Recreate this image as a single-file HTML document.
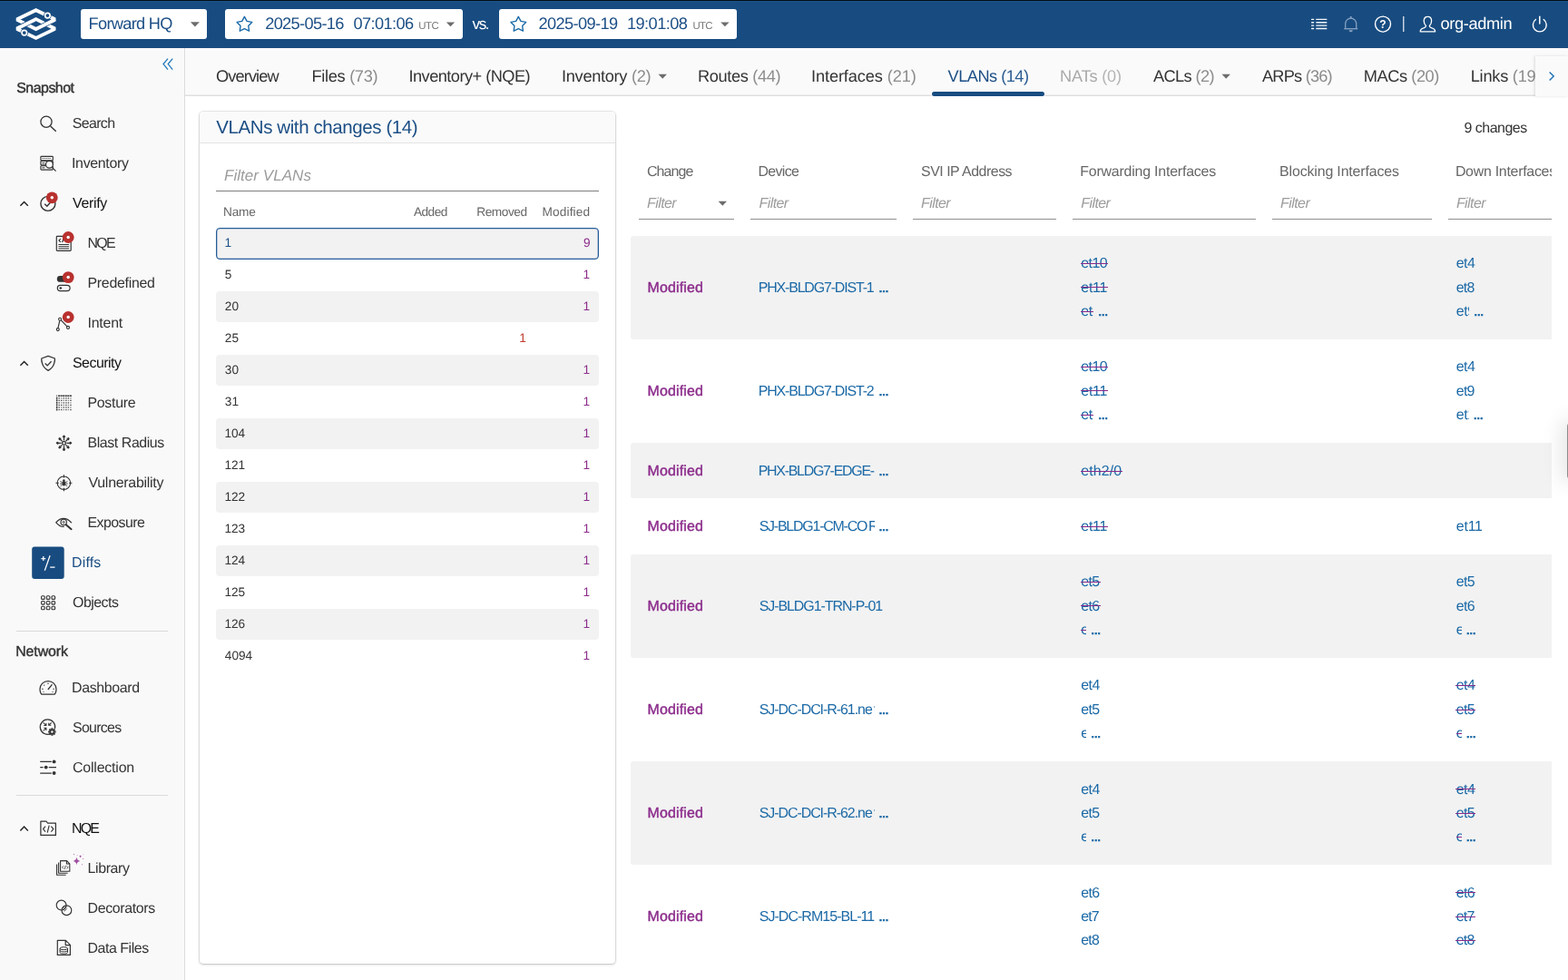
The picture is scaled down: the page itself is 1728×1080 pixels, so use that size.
<!DOCTYPE html>
<html lang="en">
<head>
<meta charset="utf-8">
<title>Forward Enterprise - Diffs - VLANs</title>
<style>
*{box-sizing:border-box;margin:0;padding:0}
html,body{width:1728px;height:1080px;overflow:hidden;background:#fff}
body{font-family:"Liberation Sans",sans-serif;color:#333;position:relative}
#txt{position:absolute;left:0;top:0;width:1728px;height:1080px;will-change:transform;text-rendering:geometricPrecision}
.tx{position:absolute;line-height:20px;height:20px;white-space:nowrap;display:block}
.tx i{font-style:normal}
.sk{position:absolute;height:1.15px;background:#8b2b8b;display:block}
#ico{position:absolute;left:0;top:0;overflow:hidden}
#hdr{position:absolute;left:0;top:0;width:1728px;height:53px;background:#184c80;border-top:1px solid #050c15;box-shadow:inset 0 1px 0 #18558b}
.hbox{position:absolute;top:10px;height:33px;background:#fff;border-radius:3px}
#side{position:absolute;left:0;top:53px;width:204px;height:1027px;background:#f9f9f9;border-right:1px solid #dcdcdc}
.hr{position:absolute;left:18px;width:167px;height:1px;background:#dadada}
#tabs{position:absolute;left:204px;top:53px;width:1524px;height:51px;background:#fafafa;box-shadow:0 1px 0 #eee,0 2px 0 #dedede}
#tabul{position:absolute;left:1026.5px;top:101px;width:124.4px;height:5px;border-radius:2.5px;background:#184c80;box-shadow:0 0 0 1px rgba(255,255,255,.85)}
#tabbtn{position:absolute;left:1692px;top:62px;width:36px;height:44px;background:#fafafa;box-shadow:-1px 0 3px rgba(0,0,0,.13)}
#card{position:absolute;left:220px;top:123px;width:458px;height:939px;background:#fff;border-radius:4px;box-shadow:0 0 0 1px rgba(0,0,0,.075),0 1px 3px rgba(0,0,0,.2)}
#card .hd{position:absolute;left:0;top:0;width:458px;height:35px;background:#fafafa;border-bottom:1px solid #e3e3e3;border-radius:4px 4px 0 0}
.vr{position:absolute;left:238px;width:422px;height:34px;border-radius:4px}
.vr.g{background:#f2f2f2}
.vr.sel{background:#f2f2f2;border:1px solid #245c9a;height:35px;box-shadow:inset 0 0 0 .3px #245c9a}
.ul{position:absolute;height:1.1px;background:#8f8f8f}
.row{position:absolute;left:695.3px;width:1014.7px;background:#f2f2f2;border-radius:3px 0 0 3px}
#rmask{position:absolute;left:1710px;top:160px;width:18px;height:920px;background:#fff}
#rhandle{position:absolute;left:1727.2px;top:466px;width:8px;height:62px;border-radius:4px;background:#8c8c8c;box-shadow:0 0 22px 5px rgba(0,0,0,.12)}
</style>
</head>
<body>
<div id="hdr"></div>
<div class="hbox" style="left:89px;width:139px"></div>
<div class="hbox" style="left:248px;width:262px"></div>
<div class="hbox" style="left:550px;width:262px"></div>
<div id="side"></div>
<div class="hr" style="top:695px"></div>
<div class="hr" style="top:876px"></div>
<div id="tabs"></div>
<div id="tabul"></div>
<div id="card"><div class="hd"></div></div>
<div class="ul" style="left:238px;top:210px;width:422px;background:#7d7d7d"></div>
<div class="vr sel" style="top:251.0px"></div>
<div class="vr g" style="top:321.0px"></div>
<div class="vr g" style="top:391.0px"></div>
<div class="vr g" style="top:461.0px"></div>
<div class="vr g" style="top:531.0px"></div>
<div class="vr g" style="top:601.0px"></div>
<div class="vr g" style="top:671.0px"></div>
<div class="ul" style="left:704.2px;top:241px;width:105.0px"></div>
<div class="ul" style="left:827px;top:241px;width:161.3px"></div>
<div class="ul" style="left:1006.2px;top:241px;width:158.0px"></div>
<div class="ul" style="left:1182px;top:241px;width:202.0px"></div>
<div class="ul" style="left:1402px;top:241px;width:175.6px"></div>
<div class="ul" style="left:1596px;top:241px;width:114.0px"></div>
<div class="row" style="top:260px;height:114px"></div>
<div class="row" style="top:488px;height:61px"></div>
<div class="row" style="top:610.7px;height:114px"></div>
<div class="row" style="top:839px;height:114px"></div>
<div id="txt">
<span class="tx" style="left:97.6px;top:16px;font-size:18.216px;color:#1b4e85;letter-spacing:-0.696px;">Forward HQ</span>
<span class="tx" style="left:292.2px;top:16px;font-size:18.216px;color:#1b4e85;letter-spacing:-0.656px;">2025-05-16</span>
<span class="tx" style="left:389.4px;top:16px;font-size:18.216px;color:#1b4e85;letter-spacing:-0.591px;">07:01:06</span>
<span class="tx" style="left:461.3px;top:19px;font-size:11.385px;color:#777;letter-spacing:-0.488px;">UTC</span>
<span class="tx" style="left:520.6px;top:16.5px;font-size:17.077px;color:#fff;letter-spacing:-1.434px;">vs.</span>
<span class="tx" style="left:593.6px;top:16px;font-size:18.216px;color:#1b4e85;letter-spacing:-0.622px;">2025-09-19</span>
<span class="tx" style="left:691px;top:16px;font-size:18.216px;color:#1b4e85;letter-spacing:-0.562px;">19:01:08</span>
<span class="tx" style="left:763.6px;top:19px;font-size:11.385px;color:#777;letter-spacing:-0.738px;">UTC</span>
<span class="tx" style="left:1587.4px;top:16px;font-size:18.216px;color:#fff;letter-spacing:-0.341px;">org-admin</span>
<span class="tx" style="left:238px;top:74.2px;font-size:18.216px;color:#333;letter-spacing:-0.89px;">Overview</span>
<span class="tx" style="left:343.5px;top:74.2px;font-size:18.216px;color:#333;letter-spacing:-0.313px;">Files <i style="color:#8c8c8c">(73)</i></span>
<span class="tx" style="left:450.5px;top:74.2px;font-size:18.216px;color:#333;letter-spacing:-0.539px;">Inventory+ (NQE)</span>
<span class="tx" style="left:619px;top:74.2px;font-size:18.216px;color:#333;letter-spacing:-0.302px;">Inventory <i style="color:#8c8c8c">(2)</i></span>
<span class="tx" style="left:769px;top:74.2px;font-size:18.216px;color:#333;letter-spacing:-0.355px;">Routes <i style="color:#8c8c8c">(44)</i></span>
<span class="tx" style="left:894px;top:74.2px;font-size:18.216px;color:#333;letter-spacing:-0.115px;">Interfaces <i style="color:#8c8c8c">(21)</i></span>
<span class="tx" style="left:1044.5px;top:74.2px;font-size:18.216px;color:#1b4e85;letter-spacing:-0.504px;">VLANs <i style="color:#2b5c93">(14)</i></span>
<span class="tx" style="left:1168px;top:74.2px;font-size:18.216px;color:#a9a9a9;letter-spacing:-0.199px;">NATs <i style="color:#b5b5b5">(0)</i></span>
<span class="tx" style="left:1271px;top:74.2px;font-size:18.216px;color:#333;letter-spacing:-0.609px;">ACLs <i style="color:#8c8c8c">(2)</i></span>
<span class="tx" style="left:1391px;top:74.2px;font-size:18.216px;color:#333;letter-spacing:-0.788px;">ARPs <i style="color:#8c8c8c">(36)</i></span>
<span class="tx" style="left:1502.8px;top:74.2px;font-size:18.216px;color:#333;letter-spacing:-0.428px;">MACs <i style="color:#8c8c8c">(20)</i></span>
<span class="tx" style="left:1620.7px;top:74.2px;font-size:18.216px;color:#333;letter-spacing:-0.231px;width:71.5px;overflow:hidden;">Links <i style="color:#8c8c8c">(19)</i></span>
<span class="tx" style="left:18.207px;top:87.7px;font-size:15.939px;color:#333;-webkit-text-stroke:0.414px #333;letter-spacing:-0.495px;">Snapshot</span>
<span class="tx" style="left:17.207px;top:709px;font-size:15.939px;color:#333;-webkit-text-stroke:0.414px #333;letter-spacing:-0.092px;">Network</span>
<span class="tx" style="left:79.7px;top:127px;font-size:15.939px;color:#333;letter-spacing:-0.618px;">Search</span>
<span class="tx" style="left:79px;top:171px;font-size:15.939px;color:#333;letter-spacing:-0.316px;">Inventory</span>
<span class="tx" style="left:80px;top:215px;font-size:15.939px;color:#111;letter-spacing:-0.312px;">Verify</span>
<span class="tx" style="left:96.5px;top:259px;font-size:15.939px;color:#333;letter-spacing:-1.693px;">NQE</span>
<span class="tx" style="left:96.5px;top:303px;font-size:15.939px;color:#333;letter-spacing:-0.295px;">Predefined</span>
<span class="tx" style="left:96.5px;top:347px;font-size:15.939px;color:#333;letter-spacing:-0.223px;">Intent</span>
<span class="tx" style="left:80px;top:391px;font-size:15.939px;color:#111;letter-spacing:-0.507px;">Security</span>
<span class="tx" style="left:96.5px;top:435px;font-size:15.939px;color:#333;letter-spacing:-0.302px;">Posture</span>
<span class="tx" style="left:96.5px;top:479px;font-size:15.939px;color:#333;letter-spacing:-0.42px;">Blast Radius</span>
<span class="tx" style="left:97.5px;top:523px;font-size:15.939px;color:#333;letter-spacing:-0.264px;">Vulnerability</span>
<span class="tx" style="left:96.5px;top:567px;font-size:15.939px;color:#333;letter-spacing:-0.557px;">Exposure</span>
<span class="tx" style="left:79px;top:611px;font-size:15.939px;color:#1b4e85;letter-spacing:0.177px;">Diffs</span>
<span class="tx" style="left:80px;top:655px;font-size:15.939px;color:#333;letter-spacing:-0.503px;">Objects</span>
<span class="tx" style="left:79px;top:748.5px;font-size:15.939px;color:#333;letter-spacing:-0.343px;">Dashboard</span>
<span class="tx" style="left:80px;top:792.5px;font-size:15.939px;color:#333;letter-spacing:-0.709px;">Sources</span>
<span class="tx" style="left:80px;top:836.5px;font-size:15.939px;color:#333;letter-spacing:-0.195px;">Collection</span>
<span class="tx" style="left:79px;top:903.5px;font-size:15.939px;color:#111;letter-spacing:-1.793px;">NQE</span>
<span class="tx" style="left:96.5px;top:947.5px;font-size:15.939px;color:#333;letter-spacing:-0.367px;">Library</span>
<span class="tx" style="left:96.5px;top:991.5px;font-size:15.939px;color:#333;letter-spacing:-0.345px;">Decorators</span>
<span class="tx" style="left:96.5px;top:1035.5px;font-size:15.939px;color:#333;letter-spacing:-0.445px;">Data Files</span>
<span class="tx" style="left:238.2px;top:130.6px;font-size:20.493px;color:#1b4e85;letter-spacing:-0.392px;">VLANs with changes (14)</span>
<span class="tx" style="left:247px;top:183.9px;font-size:17.077px;color:#9c9c9c;font-style:italic;letter-spacing:0.016px;">Filter VLANs</span>
<span class="tx" style="left:246px;top:223.6px;font-size:13.662px;color:#666;letter-spacing:-0.181px;">Name</span>
<span class="tx" style="left:455.9px;top:223.6px;font-size:13.662px;color:#666;letter-spacing:-0.501px;">Added</span>
<span class="tx" style="left:525.3px;top:223.6px;font-size:13.662px;color:#666;letter-spacing:-0.46px;">Removed</span>
<span class="tx" style="left:597.6px;top:223.6px;font-size:13.662px;color:#666;letter-spacing:0.11px;">Modified</span>
<span class="tx" style="left:247.4px;top:258.2px;font-size:13.662px;color:#1b4e85;">1</span>
<span class="tx" style="left:643px;top:258.2px;font-size:13.662px;color:#8b2b8b;">9</span>
<span class="tx" style="left:247.8px;top:293.2px;font-size:13.662px;color:#333;">5</span>
<span class="tx" style="left:642.6px;top:293.2px;font-size:13.662px;color:#8b2b8b;">1</span>
<span class="tx" style="left:247.8px;top:328.2px;font-size:13.662px;color:#333;">20</span>
<span class="tx" style="left:642.6px;top:328.2px;font-size:13.662px;color:#8b2b8b;">1</span>
<span class="tx" style="left:247.8px;top:363.2px;font-size:13.662px;color:#333;">25</span>
<span class="tx" style="left:572.2px;top:363.2px;font-size:13.662px;color:#c0392b;">1</span>
<span class="tx" style="left:247.8px;top:398.2px;font-size:13.662px;color:#333;">30</span>
<span class="tx" style="left:642.6px;top:398.2px;font-size:13.662px;color:#8b2b8b;">1</span>
<span class="tx" style="left:247.8px;top:433.2px;font-size:13.662px;color:#333;">31</span>
<span class="tx" style="left:642.6px;top:433.2px;font-size:13.662px;color:#8b2b8b;">1</span>
<span class="tx" style="left:247.4px;top:468.2px;font-size:13.662px;color:#333;">104</span>
<span class="tx" style="left:642.6px;top:468.2px;font-size:13.662px;color:#8b2b8b;">1</span>
<span class="tx" style="left:247.4px;top:503.2px;font-size:13.662px;color:#333;">121</span>
<span class="tx" style="left:642.6px;top:503.2px;font-size:13.662px;color:#8b2b8b;">1</span>
<span class="tx" style="left:247.4px;top:538.2px;font-size:13.662px;color:#333;">122</span>
<span class="tx" style="left:642.6px;top:538.2px;font-size:13.662px;color:#8b2b8b;">1</span>
<span class="tx" style="left:247.4px;top:573.2px;font-size:13.662px;color:#333;">123</span>
<span class="tx" style="left:642.6px;top:573.2px;font-size:13.662px;color:#8b2b8b;">1</span>
<span class="tx" style="left:247.4px;top:608.2px;font-size:13.662px;color:#333;">124</span>
<span class="tx" style="left:642.6px;top:608.2px;font-size:13.662px;color:#8b2b8b;">1</span>
<span class="tx" style="left:247.4px;top:643.2px;font-size:13.662px;color:#333;">125</span>
<span class="tx" style="left:642.6px;top:643.2px;font-size:13.662px;color:#8b2b8b;">1</span>
<span class="tx" style="left:247.4px;top:678.2px;font-size:13.662px;color:#333;">126</span>
<span class="tx" style="left:642.6px;top:678.2px;font-size:13.662px;color:#8b2b8b;">1</span>
<span class="tx" style="left:247.8px;top:713.2px;font-size:13.662px;color:#333;">4094</span>
<span class="tx" style="left:642.6px;top:713.2px;font-size:13.662px;color:#8b2b8b;">1</span>
<span class="tx" style="left:1613.4px;top:131.8px;font-size:15.939px;color:#333;letter-spacing:-0.464px;">9 changes</span>
<span class="tx" style="left:712.9px;top:180px;font-size:15.939px;color:#666;letter-spacing:-0.884px;">Change</span>
<span class="tx" style="left:835.5px;top:180px;font-size:15.939px;color:#666;letter-spacing:-0.662px;">Device</span>
<span class="tx" style="left:1015px;top:180px;font-size:15.939px;color:#666;letter-spacing:-0.479px;">SVI IP Address</span>
<span class="tx" style="left:1190.3px;top:180px;font-size:15.939px;color:#666;letter-spacing:-0.206px;">Forwarding Interfaces</span>
<span class="tx" style="left:1410.1px;top:180px;font-size:15.939px;color:#666;letter-spacing:-0.148px;">Blocking Interfaces</span>
<span class="tx" style="left:1603.9px;top:180px;font-size:15.939px;color:#666;letter-spacing:-0.27px;width:106.1px;overflow:hidden;">Down Interfaces</span>
<span class="tx" style="left:713px;top:214.8px;font-size:15.939px;color:#9c9c9c;font-style:italic;letter-spacing:-0.557px;">Filter</span>
<span class="tx" style="left:836.5px;top:214.8px;font-size:15.939px;color:#9c9c9c;font-style:italic;letter-spacing:-0.557px;">Filter</span>
<span class="tx" style="left:1015px;top:214.8px;font-size:15.939px;color:#9c9c9c;font-style:italic;letter-spacing:-0.557px;">Filter</span>
<span class="tx" style="left:1191.3px;top:214.8px;font-size:15.939px;color:#9c9c9c;font-style:italic;letter-spacing:-0.557px;">Filter</span>
<span class="tx" style="left:1411.1px;top:214.8px;font-size:15.939px;color:#9c9c9c;font-style:italic;letter-spacing:-0.557px;">Filter</span>
<span class="tx" style="left:1604.9px;top:214.8px;font-size:15.939px;color:#9c9c9c;font-style:italic;letter-spacing:-0.557px;">Filter</span>
<span class="tx" style="left:713.507px;top:307.5px;font-size:15.939px;color:#8b2b8b;-webkit-text-stroke:0.414px #8b2b8b;letter-spacing:0.18px;">Modified</span>
<span class="tx" style="left:835.7px;top:307.5px;font-size:15.939px;color:#1b69a6;letter-spacing:-1.143px;width:128.6px;overflow:hidden;">PHX-BLDG7-DIST-1</span>
<span class="tx" style="left:968.6px;top:308.5px;font-size:10.971px;color:#1b69a6;font-weight:bold;-webkit-text-stroke:0.6px #1b69a6;">…</span>
<span class="tx" style="left:1191.25px;top:281.1px;font-size:15.939px;color:#1b69a6;letter-spacing:-0.545px;">et10<i class="sk" style="left:-0.45px;top:8.85px;width:30.4px"></i></span>
<span class="tx" style="left:1191.25px;top:307.5px;font-size:15.939px;color:#1b69a6;letter-spacing:-0.216px;">et11<i class="sk" style="left:-0.45px;top:8.85px;width:30.2px"></i></span>
<span class="tx" style="left:1191.25px;top:333.9px;font-size:15.939px;color:#1b69a6;letter-spacing:-0.353px;width:13.85px;overflow:hidden;">et1<i class="sk" style="left:-0.45px;top:8.85px;width:400px"></i></span>
<span class="tx" style="left:1210.15px;top:334.9px;font-size:10.971px;color:#1b69a6;font-weight:bold;-webkit-text-stroke:0.6px #1b69a6;">…</span>
<span class="tx" style="left:1604.8px;top:281.1px;font-size:15.939px;color:#1b69a6;letter-spacing:-0.538px;">et4</span>
<span class="tx" style="left:1604.8px;top:307.5px;font-size:15.939px;color:#1b69a6;letter-spacing:-0.788px;">et8</span>
<span class="tx" style="left:1604.8px;top:333.9px;font-size:15.939px;color:#1b69a6;letter-spacing:-0.353px;width:14.35px;overflow:hidden;">et9</span>
<span class="tx" style="left:1624.2px;top:334.9px;font-size:10.971px;color:#1b69a6;font-weight:bold;-webkit-text-stroke:0.6px #1b69a6;">…</span>
<span class="tx" style="left:713.507px;top:421.5px;font-size:15.939px;color:#8b2b8b;-webkit-text-stroke:0.414px #8b2b8b;letter-spacing:0.18px;">Modified</span>
<span class="tx" style="left:835.7px;top:421.5px;font-size:15.939px;color:#1b69a6;letter-spacing:-1.143px;width:128.6px;overflow:hidden;">PHX-BLDG7-DIST-2</span>
<span class="tx" style="left:968.6px;top:422.5px;font-size:10.971px;color:#1b69a6;font-weight:bold;-webkit-text-stroke:0.6px #1b69a6;">…</span>
<span class="tx" style="left:1191.25px;top:395.1px;font-size:15.939px;color:#1b69a6;letter-spacing:-0.545px;">et10<i class="sk" style="left:-0.45px;top:8.85px;width:30.4px"></i></span>
<span class="tx" style="left:1191.25px;top:421.5px;font-size:15.939px;color:#1b69a6;letter-spacing:-0.216px;">et11<i class="sk" style="left:-0.45px;top:8.85px;width:30.2px"></i></span>
<span class="tx" style="left:1191.25px;top:447.9px;font-size:15.939px;color:#1b69a6;letter-spacing:-0.353px;width:13.85px;overflow:hidden;">et1<i class="sk" style="left:-0.45px;top:8.85px;width:400px"></i></span>
<span class="tx" style="left:1210.15px;top:448.9px;font-size:10.971px;color:#1b69a6;font-weight:bold;-webkit-text-stroke:0.6px #1b69a6;">…</span>
<span class="tx" style="left:1604.8px;top:395.1px;font-size:15.939px;color:#1b69a6;letter-spacing:-0.538px;">et4</span>
<span class="tx" style="left:1604.8px;top:421.5px;font-size:15.939px;color:#1b69a6;letter-spacing:-0.738px;">et9</span>
<span class="tx" style="left:1604.8px;top:447.9px;font-size:15.939px;color:#1b69a6;letter-spacing:-0.353px;width:13.95px;overflow:hidden;">et1</span>
<span class="tx" style="left:1623.8px;top:448.9px;font-size:10.971px;color:#1b69a6;font-weight:bold;-webkit-text-stroke:0.6px #1b69a6;">…</span>
<span class="tx" style="left:713.507px;top:509.75px;font-size:15.939px;color:#8b2b8b;-webkit-text-stroke:0.414px #8b2b8b;letter-spacing:0.18px;">Modified</span>
<span class="tx" style="left:835.7px;top:509.75px;font-size:15.939px;color:#1b69a6;letter-spacing:-1.259px;width:128.6px;overflow:hidden;">PHX-BLDG7-EDGE-</span>
<span class="tx" style="left:968.6px;top:510.75px;font-size:10.971px;color:#1b69a6;font-weight:bold;-webkit-text-stroke:0.6px #1b69a6;">…</span>
<span class="tx" style="left:1191.25px;top:509.75px;font-size:15.939px;color:#1b69a6;letter-spacing:0.116px;">eth2/0<i class="sk" style="left:-0.45px;top:8.85px;width:45.9px"></i></span>
<span class="tx" style="left:713.507px;top:570.9px;font-size:15.939px;color:#8b2b8b;-webkit-text-stroke:0.414px #8b2b8b;letter-spacing:0.18px;">Modified</span>
<span class="tx" style="left:836.7px;top:570.9px;font-size:15.939px;color:#1b69a6;letter-spacing:-1.205px;width:127.6px;overflow:hidden;">SJ-BLDG1-CM-CO<span style="margin-left:1.80px">R</span></span>
<span class="tx" style="left:968.6px;top:571.9px;font-size:10.971px;color:#1b69a6;font-weight:bold;-webkit-text-stroke:0.6px #1b69a6;">…</span>
<span class="tx" style="left:1191.25px;top:570.9px;font-size:15.939px;color:#1b69a6;letter-spacing:-0.216px;">et11<i class="sk" style="left:-0.45px;top:8.85px;width:30.2px"></i></span>
<span class="tx" style="left:1604.8px;top:570.9px;font-size:15.939px;color:#1b69a6;letter-spacing:-0.216px;">et11</span>
<span class="tx" style="left:713.507px;top:658.5px;font-size:15.939px;color:#8b2b8b;-webkit-text-stroke:0.414px #8b2b8b;letter-spacing:0.18px;">Modified</span>
<span class="tx" style="left:836.7px;top:658.5px;font-size:15.939px;color:#1b69a6;letter-spacing:-1.037px;">SJ-BLDG1-TRN-P-01</span>
<span class="tx" style="left:1191.25px;top:632.1px;font-size:15.939px;color:#1b69a6;letter-spacing:-0.613px;">et5<i class="sk" style="left:-0.45px;top:8.85px;width:21.95px"></i></span>
<span class="tx" style="left:1191.25px;top:658.5px;font-size:15.939px;color:#1b69a6;letter-spacing:-0.638px;">et6<i class="sk" style="left:-0.45px;top:8.85px;width:21.9px"></i></span>
<span class="tx" style="left:1191.25px;top:684.9px;font-size:15.939px;color:#1b69a6;letter-spacing:-0.353px;width:5.85px;overflow:hidden;">et<i class="sk" style="left:-0.45px;top:8.85px;width:400px"></i></span>
<span class="tx" style="left:1202.15px;top:685.9px;font-size:10.971px;color:#1b69a6;font-weight:bold;-webkit-text-stroke:0.6px #1b69a6;">…</span>
<span class="tx" style="left:1604.8px;top:632.1px;font-size:15.939px;color:#1b69a6;letter-spacing:-0.613px;">et5</span>
<span class="tx" style="left:1604.8px;top:658.5px;font-size:15.939px;color:#1b69a6;letter-spacing:-0.638px;">et6</span>
<span class="tx" style="left:1604.8px;top:684.9px;font-size:15.939px;color:#1b69a6;letter-spacing:-0.353px;width:5.85px;overflow:hidden;">et</span>
<span class="tx" style="left:1615.7px;top:685.9px;font-size:10.971px;color:#1b69a6;font-weight:bold;-webkit-text-stroke:0.6px #1b69a6;">…</span>
<span class="tx" style="left:713.507px;top:772.8px;font-size:15.939px;color:#8b2b8b;-webkit-text-stroke:0.414px #8b2b8b;letter-spacing:0.18px;">Modified</span>
<span class="tx" style="left:836.7px;top:772.8px;font-size:15.939px;color:#1b69a6;letter-spacing:-1.031px;width:127.6px;overflow:hidden;">SJ-DC-DCI-R-61.ne<span style="margin-left:2.00px">t</span></span>
<span class="tx" style="left:968.6px;top:773.8px;font-size:10.971px;color:#1b69a6;font-weight:bold;-webkit-text-stroke:0.6px #1b69a6;">…</span>
<span class="tx" style="left:1191.25px;top:746.4px;font-size:15.939px;color:#1b69a6;letter-spacing:-0.538px;">et4</span>
<span class="tx" style="left:1191.25px;top:772.8px;font-size:15.939px;color:#1b69a6;letter-spacing:-0.613px;">et5</span>
<span class="tx" style="left:1191.25px;top:799.2px;font-size:15.939px;color:#1b69a6;letter-spacing:-0.353px;width:5.85px;overflow:hidden;">et</span>
<span class="tx" style="left:1202.15px;top:800.2px;font-size:10.971px;color:#1b69a6;font-weight:bold;-webkit-text-stroke:0.6px #1b69a6;">…</span>
<span class="tx" style="left:1604.8px;top:746.4px;font-size:15.939px;color:#1b69a6;letter-spacing:-0.538px;">et4<i class="sk" style="left:-0.45px;top:8.85px;width:22.1px"></i></span>
<span class="tx" style="left:1604.8px;top:772.8px;font-size:15.939px;color:#1b69a6;letter-spacing:-0.613px;">et5<i class="sk" style="left:-0.45px;top:8.85px;width:21.95px"></i></span>
<span class="tx" style="left:1604.8px;top:799.2px;font-size:15.939px;color:#1b69a6;letter-spacing:-0.353px;width:5.85px;overflow:hidden;">et<i class="sk" style="left:-0.45px;top:8.85px;width:400px"></i></span>
<span class="tx" style="left:1615.7px;top:800.2px;font-size:10.971px;color:#1b69a6;font-weight:bold;-webkit-text-stroke:0.6px #1b69a6;">…</span>
<span class="tx" style="left:713.507px;top:886.9px;font-size:15.939px;color:#8b2b8b;-webkit-text-stroke:0.414px #8b2b8b;letter-spacing:0.18px;">Modified</span>
<span class="tx" style="left:836.7px;top:886.9px;font-size:15.939px;color:#1b69a6;letter-spacing:-1.031px;width:127.6px;overflow:hidden;">SJ-DC-DCI-R-62.ne<span style="margin-left:2.00px">t</span></span>
<span class="tx" style="left:968.6px;top:887.9px;font-size:10.971px;color:#1b69a6;font-weight:bold;-webkit-text-stroke:0.6px #1b69a6;">…</span>
<span class="tx" style="left:1191.25px;top:860.5px;font-size:15.939px;color:#1b69a6;letter-spacing:-0.538px;">et4</span>
<span class="tx" style="left:1191.25px;top:886.9px;font-size:15.939px;color:#1b69a6;letter-spacing:-0.613px;">et5</span>
<span class="tx" style="left:1191.25px;top:913.3px;font-size:15.939px;color:#1b69a6;letter-spacing:-0.353px;width:5.85px;overflow:hidden;">et</span>
<span class="tx" style="left:1202.15px;top:914.3px;font-size:10.971px;color:#1b69a6;font-weight:bold;-webkit-text-stroke:0.6px #1b69a6;">…</span>
<span class="tx" style="left:1604.8px;top:860.5px;font-size:15.939px;color:#1b69a6;letter-spacing:-0.538px;">et4<i class="sk" style="left:-0.45px;top:8.85px;width:22.1px"></i></span>
<span class="tx" style="left:1604.8px;top:886.9px;font-size:15.939px;color:#1b69a6;letter-spacing:-0.613px;">et5<i class="sk" style="left:-0.45px;top:8.85px;width:21.95px"></i></span>
<span class="tx" style="left:1604.8px;top:913.3px;font-size:15.939px;color:#1b69a6;letter-spacing:-0.353px;width:5.85px;overflow:hidden;">et<i class="sk" style="left:-0.45px;top:8.85px;width:400px"></i></span>
<span class="tx" style="left:1615.7px;top:914.3px;font-size:10.971px;color:#1b69a6;font-weight:bold;-webkit-text-stroke:0.6px #1b69a6;">…</span>
<span class="tx" style="left:713.507px;top:1000.9px;font-size:15.939px;color:#8b2b8b;-webkit-text-stroke:0.414px #8b2b8b;letter-spacing:0.18px;">Modified</span>
<span class="tx" style="left:836.7px;top:1000.9px;font-size:15.939px;color:#1b69a6;letter-spacing:-0.92px;width:127.6px;overflow:hidden;">SJ-DC-RM15-BL-11</span>
<span class="tx" style="left:968.6px;top:1001.9px;font-size:10.971px;color:#1b69a6;font-weight:bold;-webkit-text-stroke:0.6px #1b69a6;">…</span>
<span class="tx" style="left:1191.25px;top:974.5px;font-size:15.939px;color:#1b69a6;letter-spacing:-0.638px;">et6</span>
<span class="tx" style="left:1191.25px;top:1000.9px;font-size:15.939px;color:#1b69a6;letter-spacing:-0.838px;">et7</span>
<span class="tx" style="left:1191.25px;top:1027.3px;font-size:15.939px;color:#1b69a6;letter-spacing:-0.788px;">et8</span>
<span class="tx" style="left:1604.8px;top:974.5px;font-size:15.939px;color:#1b69a6;letter-spacing:-0.638px;">et6<i class="sk" style="left:-0.45px;top:8.85px;width:21.9px"></i></span>
<span class="tx" style="left:1604.8px;top:1000.9px;font-size:15.939px;color:#1b69a6;letter-spacing:-0.838px;">et7<i class="sk" style="left:-0.45px;top:8.85px;width:21.5px"></i></span>
<span class="tx" style="left:1604.8px;top:1027.3px;font-size:15.939px;color:#1b69a6;letter-spacing:-0.788px;">et8<i class="sk" style="left:-0.45px;top:8.85px;width:21.6px"></i></span>
</div>
<div id="tabbtn"></div><div id="rmask"></div><div id="rhandle"></div>
<svg id="ico" width="1728" height="1080" viewBox="0 0 1728 1080"><g transform="translate(39.6 26.6)" ><clipPath id="lgc"><rect x="-21.9" y="-20" width="43.8" height="40"/></clipPath><g clip-path="url(#lgc)" fill="none" stroke-linejoin="miter" stroke-miterlimit="8"><path d="M-9.5 0.58 L-21.4 -5.13 L0 -15.4 L21.4 -5.13 L0 5.45 L-10.6 0.21" stroke="#fff" stroke-width="3.8"/><path d="M-9.5 0.58 L-21.4 -5.13 L0 -15.4 L21.4 -5.13 L0 5.45 L-10.6 0.21" stroke="#fff" stroke-width="3.8" transform="rotate(180)"/><path d="M16.9 -2.90 L2 4.46" stroke="#184c80" stroke-width="5.3"/><path d="M16.9 -2.90 L2 4.46" stroke="#184c80" stroke-width="5.3" transform="rotate(180)"/><path d="M21.4 -5.13 L1.6 4.66" stroke="#fff" stroke-width="3.8"/><path d="M21.4 -5.13 L1.6 4.66" stroke="#fff" stroke-width="3.8" transform="rotate(180)"/></g><circle cx="12.8" cy="-9.5" r="4.3" fill="#184c80"/><circle cx="12.8" cy="-9.5" r="2.75" fill="#184c80" stroke="#fff" stroke-width="1.7"/><circle cx="-12.8" cy="9.5" r="4.3" fill="#184c80"/><circle cx="-12.8" cy="9.5" r="2.75" fill="#184c80" stroke="#fff" stroke-width="1.7"/></g><path d="M209.9 24.299999999999997 h10 l-5.0 5.2 z" fill="#6d6d6d"/><g transform="translate(269.4 27.1)" ><polygon points="0.00,-8.75 2.70,-3.72 8.32,-2.70 4.37,1.42 5.14,7.08 0.00,4.60 -5.14,7.08 -4.37,1.42 -8.32,-2.70 -2.70,-3.72" fill="none" stroke="#1b6aa8" stroke-width="1.4" stroke-linejoin="round"/></g><path d="M491.8 24.45 h9.4 l-4.7 4.9 z" fill="#6d6d6d"/><g transform="translate(571.3 27.1)" ><polygon points="0.00,-8.75 2.70,-3.72 8.32,-2.70 4.37,1.42 5.14,7.08 0.00,4.60 -5.14,7.08 -4.37,1.42 -8.32,-2.70 -2.70,-3.72" fill="none" stroke="#1b6aa8" stroke-width="1.4" stroke-linejoin="round"/></g><path d="M794.1999999999999 24.45 h9.4 l-4.7 4.9 z" fill="#6d6d6d"/><rect x="1445" y="20.70" width="3.2" height="1.4" rx="0.4" fill="#f4f6f9"/><rect x="1450.2" y="20.70" width="12.2" height="1.4" rx="0.4" fill="#f4f6f9"/><rect x="1445" y="24.05" width="3.2" height="1.4" rx="0.4" fill="#f4f6f9"/><rect x="1450.2" y="24.05" width="12.2" height="1.4" rx="0.4" fill="#f4f6f9"/><rect x="1445" y="27.40" width="3.2" height="1.4" rx="0.4" fill="#f4f6f9"/><rect x="1450.2" y="27.40" width="12.2" height="1.4" rx="0.4" fill="#f4f6f9"/><rect x="1445" y="30.75" width="3.2" height="1.4" rx="0.4" fill="#f4f6f9"/><rect x="1450.2" y="30.75" width="12.2" height="1.4" rx="0.4" fill="#f4f6f9"/><g transform="translate(1488.7 26.5)" ><path d="M-6 5.2 V-0.2 A6 6.2 0 0 1 6 -0.2 V5.2" fill="none" stroke="#89a3c3" stroke-width="1.25"/><path d="M-7.5 5.2 H7.5" stroke="#89a3c3" stroke-width="1.3"/><circle cx="0" cy="-7.4" r="1.15" fill="#89a3c3"/><path d="M-2.1 6.7 A2.1 2.1 0 0 0 2.1 6.7 Z" fill="#89a3c3"/></g><g transform="translate(1524 26.6)" ><circle r="8.5" fill="none" stroke="#fff" stroke-width="1.4"/><text x="0" y="4.3" text-anchor="middle" font-family="Liberation Sans, sans-serif" font-weight="bold" font-size="12" fill="#fff">?</text></g><rect x="1546.1" y="18" width="1.3" height="17" fill="#dfe6ee"/><g transform="translate(1573.4 26.5)" ><path d="M0 -8.2 C2.7 -8.2 4.2 -6 4.2 -3.4 C4.2 -1 3 1 1.9 1.9 C1.9 3.3 2.5 3.6 4.5 4.3 C7 5.1 8.2 6 8.2 8.3 H-8.2 C-8.2 6 -7 5.1 -4.5 4.3 C-2.5 3.6 -1.9 3.3 -1.9 1.9 C-3 1 -4.2 -1 -4.2 -3.4 C-4.2 -6 -2.7 -8.2 0 -8.2 Z" fill="none" stroke="#fff" stroke-width="1.3" stroke-linejoin="round"/></g><g transform="translate(1696.8 27.3)" ><path d="M-4.4 -5.8 A7.4 7.4 0 1 0 4.4 -5.8" fill="none" stroke="#fff" stroke-width="1.4" stroke-linecap="round"/><path d="M0 -9 V-1.2" stroke="#fff" stroke-width="1.5" stroke-linecap="round"/></g><path d="M725.5 81.75 h9.4 l-4.7 4.9 z" fill="#6d6d6d"/><path d="M1346.5 81.75 h9.4 l-4.7 4.9 z" fill="#6d6d6d"/><path d="M1707.6 79.4 L1712.2 84 L1707.6 88.6" fill="none" stroke="#1b6fb5" stroke-width="1.4"/><path d="M185 64.6 L180 70.6 L185 76.6 M190.2 64.6 L185.2 70.6 L190.2 76.6" fill="none" stroke="#1b75bb" stroke-width="1.25"/><circle cx="51" cy="134.2" r="6.1" fill="none" stroke="#333" stroke-width="1.3"/><path d="M55.6 138.9 L61.7 144.7" fill="none" stroke="#333" stroke-width="1.4" /><rect x="44.9" y="172.3" width="13.4" height="4.4" rx="0.8" fill="none" stroke="#333" stroke-width="1.15"/><rect x="44.9" y="177.5" width="13.4" height="4.4" rx="0.8" fill="none" stroke="#333" stroke-width="1.15"/><rect x="44.9" y="182.70000000000002" width="13.4" height="4.4" rx="0.8" fill="none" stroke="#333" stroke-width="1.15"/><rect x="46.6" y="174" width="1" height="1" fill="#333"/><rect x="48.6" y="174" width="1" height="1" fill="#333"/><rect x="50.6" y="174" width="1" height="1" fill="#333"/><rect x="52.6" y="174" width="1" height="1" fill="#333"/><rect x="54.6" y="174" width="1" height="1" fill="#333"/><rect x="46.4" y="179.2" width="3" height="1" fill="#333"/><rect x="46.4" y="184.4" width="3" height="1" fill="#333"/><circle cx="54.4" cy="181.3" r="3.9" fill="#f9f9f9" stroke="#333" stroke-width="1.2"/><path d="M57.3 184.4 L61.6 188.6" fill="none" stroke="#333" stroke-width="1.3" /><circle cx="52.9" cy="224.4" r="8.0" fill="none" stroke="#333" stroke-width="1.4"/><path d="M49.2 224.8 L51.8 227.3 L56.2 222.5" fill="none" stroke="#333" stroke-width="1.4" /><g transform="translate(57.3 217.8)" ><circle r="6.4" fill="#b8312f"/><circle r="1.75" fill="#fff"/></g><g transform="translate(26.6 224.6)" ><path d="M-4.2 2.2 L0 -2.1 L4.2 2.2" fill="none" stroke="#222" stroke-width="1.45"/></g><rect x="62.3" y="260.4" width="15.9" height="15.9" rx="0.8" fill="none" stroke="#333" stroke-width="1.2"/><path d="M66.8 263.2 L65 265 L66.8 266.8 M70 263 L68.6 267" fill="none" stroke="#333" stroke-width="1.2" /><rect x="64.4" y="269.0" width="11.7" height="1" fill="#333"/><rect x="64.4" y="271.2" width="11.7" height="1" fill="#333"/><rect x="64.4" y="273.4" width="11.7" height="1" fill="#333"/><g transform="translate(75.2 261.5)" ><circle r="6.4" fill="#b8312f"/><circle r="1.75" fill="#fff"/></g><rect x="62.8" y="304" width="14.6" height="6.8" rx="3.4" fill="#333"/><rect x="63.3" y="314.4" width="13.8" height="6.2" rx="3.1" fill="none" stroke="#333" stroke-width="1.2"/><circle cx="66.8" cy="317.5" r="1.35" fill="#333"/><g transform="translate(75.2 305.6)" ><circle r="6.4" fill="#b8312f"/><circle r="1.75" fill="#fff"/></g><path d="M63.9 361.6 L65.8 353.4 M67 352.6 L74 359.8" fill="none" stroke="#333" stroke-width="1.2" /><circle cx="66.1" cy="351.8" r="1.5" fill="none" stroke="#333" stroke-width="1.1"/><circle cx="63.8" cy="363.1" r="1.5" fill="none" stroke="#333" stroke-width="1.1"/><circle cx="75" cy="360.9" r="1.5" fill="none" stroke="#333" stroke-width="1.1"/><g transform="translate(75.2 349.5)" ><circle r="6.4" fill="#b8312f"/><circle r="1.75" fill="#fff"/></g><g transform="translate(26.6 400.6)" ><path d="M-4.2 2.2 L0 -2.1 L4.2 2.2" fill="none" stroke="#222" stroke-width="1.45"/></g><path d="M53.1 392.3 L60.4 395 C60.4 395 61.2 404.4 53.1 408.3 C45 404.4 45.8 395 45.8 395 Z" fill="none" stroke="#333" stroke-width="1.3" stroke-linejoin="round"/><path d="M49.7 400.5 L52.2 402.9 L56.6 398.2" fill="none" stroke="#333" stroke-width="1.3" /><rect x="61.90" y="435.50" width="1.2" height="1.2" fill="#333" opacity="0.8"/><rect x="61.90" y="437.70" width="1.5" height="2" fill="#333"/><rect x="61.90" y="440.25" width="1.5" height="2" fill="#333"/><rect x="61.90" y="442.80" width="1.5" height="2" fill="#333"/><rect x="61.90" y="445.35" width="1.5" height="2" fill="#333"/><rect x="61.90" y="447.90" width="1.5" height="2" fill="#333"/><rect x="61.90" y="450.45" width="1.5" height="2" fill="#333"/><rect x="64.05" y="435.50" width="2.1" height="1.5" fill="#333"/><rect x="64.55" y="438.15" width="1.3" height="1.3" fill="#333" opacity="0.95"/><rect x="64.55" y="440.70" width="1.3" height="1.3" fill="#333" opacity="0.95"/><rect x="64.55" y="443.25" width="1.3" height="1.3" fill="#333" opacity="0.95"/><rect x="64.55" y="445.80" width="1.3" height="1.3" fill="#333" opacity="0.95"/><rect x="64.55" y="448.35" width="1.3" height="1.3" fill="#333" opacity="0.95"/><rect x="64.55" y="450.90" width="1.3" height="1.3" fill="#333" opacity="0.95"/><rect x="66.60" y="435.50" width="2.1" height="1.5" fill="#333"/><rect x="67.10" y="438.15" width="1.3" height="1.3" fill="#333" opacity="0.6"/><rect x="67.10" y="440.70" width="1.3" height="1.3" fill="#333" opacity="0.95"/><rect x="67.10" y="443.25" width="1.3" height="1.3" fill="#333" opacity="0.6"/><rect x="67.10" y="445.80" width="1.3" height="1.3" fill="#333" opacity="0.95"/><rect x="67.10" y="448.35" width="1.3" height="1.3" fill="#333" opacity="0.6"/><rect x="67.10" y="450.90" width="1.3" height="1.3" fill="#333" opacity="0.95"/><rect x="69.15" y="435.50" width="2.1" height="1.5" fill="#333"/><rect x="69.65" y="438.15" width="1.3" height="1.3" fill="#333" opacity="0.95"/><rect x="69.65" y="440.70" width="1.3" height="1.3" fill="#333" opacity="0.6"/><rect x="69.65" y="443.25" width="1.3" height="1.3" fill="#333" opacity="0.95"/><rect x="69.65" y="445.80" width="1.3" height="1.3" fill="#333" opacity="0.6"/><rect x="69.65" y="448.35" width="1.3" height="1.3" fill="#333" opacity="0.95"/><rect x="69.65" y="450.90" width="1.3" height="1.3" fill="#333" opacity="0.6"/><rect x="71.70" y="435.50" width="2.1" height="1.5" fill="#333"/><rect x="72.20" y="438.15" width="1.3" height="1.3" fill="#333" opacity="0.95"/><rect x="72.20" y="440.70" width="1.3" height="1.3" fill="#333" opacity="0.95"/><rect x="72.20" y="443.25" width="1.3" height="1.3" fill="#333" opacity="0.95"/><rect x="72.20" y="445.80" width="1.3" height="1.3" fill="#333" opacity="0.95"/><rect x="72.20" y="448.35" width="1.3" height="1.3" fill="#333" opacity="0.95"/><rect x="72.20" y="450.90" width="1.3" height="1.3" fill="#333" opacity="0.95"/><rect x="74.25" y="435.50" width="2.1" height="1.5" fill="#333"/><rect x="74.75" y="438.15" width="1.3" height="1.3" fill="#333" opacity="0.95"/><rect x="74.75" y="440.70" width="1.3" height="1.3" fill="#333" opacity="0.6"/><rect x="74.75" y="443.25" width="1.3" height="1.3" fill="#333" opacity="0.95"/><rect x="74.75" y="445.80" width="1.3" height="1.3" fill="#333" opacity="0.6"/><rect x="74.75" y="448.35" width="1.3" height="1.3" fill="#333" opacity="0.95"/><rect x="74.75" y="450.90" width="1.3" height="1.3" fill="#333" opacity="0.6"/><rect x="76.80" y="435.50" width="2.1" height="1.5" fill="#333"/><rect x="77.30" y="438.15" width="1.3" height="1.3" fill="#333" opacity="0.6"/><rect x="77.30" y="440.70" width="1.3" height="1.3" fill="#333" opacity="0.95"/><rect x="77.30" y="443.25" width="1.3" height="1.3" fill="#333" opacity="0.6"/><rect x="77.30" y="445.80" width="1.3" height="1.3" fill="#333" opacity="0.95"/><rect x="77.30" y="448.35" width="1.3" height="1.3" fill="#333" opacity="0.6"/><rect x="77.30" y="450.90" width="1.3" height="1.3" fill="#333" opacity="0.95"/><g transform="translate(70.5 488.3)" ><circle cx="0" cy="0" r="1.9" fill="none" stroke="#333" stroke-width="1.2"/><path d="M2.90 0.00 L8.40 0.00" fill="none" stroke="#333" stroke-width="1.3" /><path d="M8.40 0.00 L6.23 1.25" fill="none" stroke="#333" stroke-width="1.2" /><path d="M8.40 0.00 L6.23 -1.25" fill="none" stroke="#333" stroke-width="1.2" /><path d="M2.05 2.05 L5.52 5.52" fill="none" stroke="#333" stroke-width="1.3" /><path d="M5.52 5.52 L3.10 4.87" fill="none" stroke="#333" stroke-width="1.2" /><path d="M5.52 5.52 L4.87 3.10" fill="none" stroke="#333" stroke-width="1.2" /><path d="M0.00 2.90 L0.00 8.40" fill="none" stroke="#333" stroke-width="1.3" /><path d="M0.00 8.40 L-1.25 6.23" fill="none" stroke="#333" stroke-width="1.2" /><path d="M0.00 8.40 L1.25 6.23" fill="none" stroke="#333" stroke-width="1.2" /><path d="M-2.05 2.05 L-5.52 5.52" fill="none" stroke="#333" stroke-width="1.3" /><path d="M-5.52 5.52 L-4.87 3.10" fill="none" stroke="#333" stroke-width="1.2" /><path d="M-5.52 5.52 L-3.10 4.87" fill="none" stroke="#333" stroke-width="1.2" /><path d="M-2.90 0.00 L-8.40 0.00" fill="none" stroke="#333" stroke-width="1.3" /><path d="M-8.40 0.00 L-6.23 -1.25" fill="none" stroke="#333" stroke-width="1.2" /><path d="M-8.40 0.00 L-6.23 1.25" fill="none" stroke="#333" stroke-width="1.2" /><path d="M-2.05 -2.05 L-5.52 -5.52" fill="none" stroke="#333" stroke-width="1.3" /><path d="M-5.52 -5.52 L-3.10 -4.87" fill="none" stroke="#333" stroke-width="1.2" /><path d="M-5.52 -5.52 L-4.87 -3.10" fill="none" stroke="#333" stroke-width="1.2" /><path d="M-0.00 -2.90 L-0.00 -8.40" fill="none" stroke="#333" stroke-width="1.3" /><path d="M-0.00 -8.40 L1.25 -6.23" fill="none" stroke="#333" stroke-width="1.2" /><path d="M-0.00 -8.40 L-1.25 -6.23" fill="none" stroke="#333" stroke-width="1.2" /><path d="M2.05 -2.05 L5.52 -5.52" fill="none" stroke="#333" stroke-width="1.3" /><path d="M5.52 -5.52 L4.87 -3.10" fill="none" stroke="#333" stroke-width="1.2" /><path d="M5.52 -5.52 L3.10 -4.87" fill="none" stroke="#333" stroke-width="1.2" /></g><g transform="translate(70.4 532.2)" ><circle cx="0" cy="0" r="7.2" fill="none" stroke="#333" stroke-width="1.15"/><path d="M0 -9 V-5.6 M0 9 V5.6 M-9 0 H-5.6 M9 0 H5.6" fill="none" stroke="#333" stroke-width="1.15" /><ellipse cx="0" cy="0.5" rx="2" ry="2.7" fill="#333"/><circle cx="0" cy="-2.6" r="1.3" fill="#333"/><path d="M-1.8 -0.6 L-4 -1.8 M1.8 -0.6 L4 -1.8 M-2 0.8 H-4.3 M2 0.8 H4.3 M-1.8 2 L-3.8 3.6 M1.8 2 L3.8 3.6" fill="none" stroke="#333" stroke-width="0.9" /></g><g transform="translate(70 575.8)" ><path d="M-8.2 0 Q0 -8.6 8.4 0 M-8.2 0 Q-3.5 5.2 0.2 4.6" fill="none" stroke="#333" stroke-width="1.25" stroke-linecap="round"/><circle cx="0.2" cy="-0.3" r="3.2" fill="none" stroke="#333" stroke-width="1.15"/><circle cx="0.2" cy="-0.3" r="1.1" fill="none" stroke="#333" stroke-width="0.9"/><path d="M2.7 2.4 L8.6 7.4" fill="none" stroke="#333" stroke-width="2.0" stroke-linecap="round"/></g><rect x="35.2" y="602.4" width="35.5" height="35.5" rx="3" fill="#184c80"/><path d="M45.4 615.5 H50.2 M47.8 613.1 V617.9 M49.3 628.8 L55.1 612.2 M55.2 625 H60.5" fill="none" stroke="#fff" stroke-width="1.25"/><rect x="45.6" y="656.8" width="3.6" height="3.6" rx="1" fill="none" stroke="#333" stroke-width="1.1"/><rect x="45.6" y="662.5" width="3.6" height="3.6" rx="1" fill="none" stroke="#333" stroke-width="1.1"/><rect x="45.6" y="668.2" width="3.6" height="3.6" rx="1" fill="none" stroke="#333" stroke-width="1.1"/><rect x="51.3" y="656.8" width="3.6" height="3.6" rx="1" fill="none" stroke="#333" stroke-width="1.1"/><rect x="51.3" y="662.5" width="3.6" height="3.6" rx="1" fill="none" stroke="#333" stroke-width="1.1"/><rect x="51.3" y="668.2" width="3.6" height="3.6" rx="1" fill="none" stroke="#333" stroke-width="1.1"/><rect x="57.0" y="656.8" width="3.6" height="3.6" rx="1" fill="none" stroke="#333" stroke-width="1.1"/><rect x="57.0" y="662.5" width="3.6" height="3.6" rx="1" fill="none" stroke="#333" stroke-width="1.1"/><rect x="57.0" y="668.2" width="3.6" height="3.6" rx="1" fill="none" stroke="#333" stroke-width="1.1"/><g transform="translate(53 757.9)" ><path d="M-7.2 7.3 C-8.6 5.6 -9 3.6 -9 1.6 A9 9 0 0 1 9 1.6 C9 3.6 8.6 5.6 7.2 7.3 Z" fill="none" stroke="#333" stroke-width="1.25" stroke-linejoin="round"/><path d="M0.2 1.6 L4.2 -3.2" fill="none" stroke="#333" stroke-width="1.3" stroke-linecap="round"/><circle cx="0" cy="-4.6" r="0.7" fill="#333"/><circle cx="-4.3" cy="-2.8" r="0.7" fill="#333"/><circle cx="-6.1" cy="1.4" r="0.7" fill="#333"/><circle cx="6.1" cy="1.4" r="0.7" fill="#333"/><circle cx="-5" cy="4.6" r="0.6" fill="#333"/><circle cx="5" cy="4.6" r="0.6" fill="#333"/></g><g transform="translate(52.5 801.1)" ><path d="M3.6 7.4 A8.2 8.2 0 1 1 8 1.8" fill="none" stroke="#333" stroke-width="1.25" /><path d="M-4.8 -4.8 L-1.6 -1.6 M-1.6 -4.2 V-1.6 H-4.2 M4.2 -4.8 L1.2 -1.8 M1.2 -4.4 V-1.8 H3.8 M-4.8 4.4 L-1.6 1.2 M-4.2 1.2 H-1.6 V3.8" fill="none" stroke="#333" stroke-width="1.05" /><g transform="translate(4.9 5.4)" ><rect x="-0.95" y="-4.3" width="1.9" height="2.2" fill="#333" transform="rotate(0)"/><rect x="-0.95" y="-4.3" width="1.9" height="2.2" fill="#333" transform="rotate(45)"/><rect x="-0.95" y="-4.3" width="1.9" height="2.2" fill="#333" transform="rotate(90)"/><rect x="-0.95" y="-4.3" width="1.9" height="2.2" fill="#333" transform="rotate(135)"/><rect x="-0.95" y="-4.3" width="1.9" height="2.2" fill="#333" transform="rotate(180)"/><rect x="-0.95" y="-4.3" width="1.9" height="2.2" fill="#333" transform="rotate(225)"/><rect x="-0.95" y="-4.3" width="1.9" height="2.2" fill="#333" transform="rotate(270)"/><rect x="-0.95" y="-4.3" width="1.9" height="2.2" fill="#333" transform="rotate(315)"/><circle r="2.9" fill="#333"/><circle r="1.25" fill="#f9f9f9"/></g></g><path d="M44.2 839.4 H56.8 M44.2 845.6 H47.6 M53.8 845.6 H62 M44.2 852 H56.8" fill="none" stroke="#333" stroke-width="1.25" /><circle cx="59.6" cy="839.4" r="1.95" fill="#333"/><circle cx="50.7" cy="845.6" r="1.95" fill="#333"/><circle cx="59.6" cy="852" r="1.95" fill="#333"/><g transform="translate(26.6 913.2)" ><path d="M-4.2 2.2 L0 -2.1 L4.2 2.2" fill="none" stroke="#222" stroke-width="1.45"/></g><path d="M44.9 920.4 V905 H51 L52.4 907 H61.4 V920.4 Z" fill="none" stroke="#333" stroke-width="1.25" stroke-linejoin="round"/><path d="M50 910.6 L47.6 913.6 L50 916.6 M56.4 910.6 L58.8 913.6 L56.4 916.6 M54.2 909.6 L52.2 917.6" fill="none" stroke="#333" stroke-width="1.15" /><path d="M66.6 948.6 H73.6 L76.8 951.8 V960.2 H66.6 Z M73.4 948.8 V952 H76.6" fill="none" stroke="#333" stroke-width="1.1" stroke-linejoin="round"/><path d="M64.6 950.4 V962.2 H74.6 M62.6 952.4 V964.2 H72.6" fill="none" stroke="#333" stroke-width="1.1" stroke-linejoin="round"/><path d="M70 954.2 L68.6 955.8 L70 957.4 M73.6 954.2 L75 955.8 L73.6 957.4 M72.3 953.8 L71.3 957.8" fill="none" stroke="#333" stroke-width="0.8" /><path d="M84.4 944.6 Q84.9 948.4 88.2 948.9 Q84.9 949.4 84.4 953.2 Q83.9 949.4 80.6 948.9 Q83.9 948.4 84.4 944.6 Z" fill="#a24ea2"/><path d="M88.6 942.2 Q88.8 943.6 90.2 943.8 Q88.8 944 88.6 945.4 Q88.4 944 87 943.8 Q88.4 943.6 88.6 942.2 Z" fill="#a24ea2"/><circle cx="81.4" cy="941.6" r="0.55" fill="#a24ea2"/><circle cx="85.2" cy="942.6" r="0.45" fill="#a24ea2"/><circle cx="91.6" cy="946.4" r="0.5" fill="#a24ea2"/><circle cx="90.6" cy="952.8" r="0.5" fill="#a24ea2"/><circle cx="92" cy="941.8" r="0.4" fill="#a24ea2"/><circle cx="67.6" cy="997.6" r="5.4" fill="none" stroke="#333" stroke-width="1.15"/><circle cx="73.4" cy="1003.2" r="5.4" fill="none" stroke="#333" stroke-width="1.15"/><path d="M68.4 1001.8 L72 998.2 M69.6 1003.2 L73.2 999.6 M70.6 1004.4 L73.6 1001.4" fill="none" stroke="#333" stroke-width="0.9" /><path d="M63.3 1036.4 H72.4 L77.4 1041.4 V1052.4 H63.3 Z M72.2 1036.6 V1041.6 H77.2" fill="none" stroke="#333" stroke-width="1.2" stroke-linejoin="round"/><ellipse cx="70.3" cy="1045.2" rx="4.2" ry="1.5" fill="none" stroke="#333" stroke-width="1"/><path d="M66.1 1045.2 V1049.6 C66.1 1051.6 74.5 1051.6 74.5 1049.6 V1045.2 M66.1 1047.4 C66.1 1049.4 74.5 1049.4 74.5 1047.4" fill="none" stroke="#333" stroke-width="1.0" /><path d="M791.5999999999999 221.75 h9.4 l-4.7 4.9 z" fill="#6d6d6d"/></svg>
</body>
</html>
